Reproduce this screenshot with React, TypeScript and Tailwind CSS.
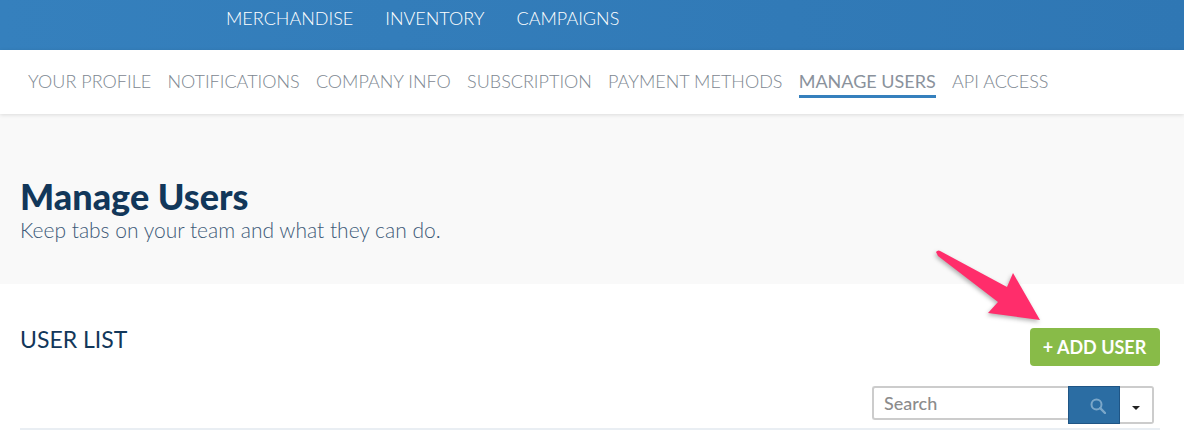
const mainLinks = ["MERCHANDISE", "INVENTORY", "CAMPAIGNS"];

const tabs = [
  "YOUR PROFILE",
  "NOTIFICATIONS",
  "COMPANY INFO",
  "SUBSCRIPTION",
  "PAYMENT METHODS",
  "MANAGE USERS",
  "API ACCESS",
];

export default function App() {
  return (
    <div className="relative h-[434px] w-[1184px] overflow-hidden bg-white font-['Lato',sans-serif]">
      <header className="flex h-[50px] gap-8 bg-gradient-to-r from-[#3580bd] to-[#2f77b4] pl-[226px] pt-[6px]">
        {mainLinks.map((link) => (
          <span key={link} className="h-6 text-[18px] font-light leading-6 text-white">
            {link}
          </span>
        ))}
      </header>

      <nav className="relative flex h-[64px] gap-[16.2px] bg-white pl-7 pt-[20px] shadow-[0_1px_4px_rgba(0,0,0,0.12)]">
        {tabs.map((tab) =>
          tab === "MANAGE USERS" ? (
            <span
              key={tab}
              className="h-[28px] border-b-[3px] border-[#3580bd] text-[18px] leading-[23px] text-[#8a929c]"
            >
              {tab}
            </span>
          ) : (
            <span key={tab} className="h-[28px] text-[18px] font-light leading-[23px] text-[#7d8791]">
              {tab}
            </span>
          ),
        )}
      </nav>

      <section className="h-[170px] bg-[#f9f9f9] pl-5 pt-[61px]">
        <h1 className="text-[36px] font-black leading-[42px] text-[#12375a]">Manage Users</h1>
        <p className="mt-[1px] text-[21px] font-light leading-[24px] text-[#3d5a78]">
          Keep tabs on your team and what they can do.
        </p>
      </section>

      <section className="px-6 pl-5">
        <div className="flex items-start justify-between pt-[44px]">
          <h2 className="text-[23px] leading-[23px] text-[#12375a]">USER LIST</h2>
          <button className="h-[38px] w-[130px] rounded-[4px] bg-[#88bb48] pr-[1px] text-[18px] font-bold text-white">
            + ADD USER
          </button>
        </div>
        <div className="mt-[20px] flex justify-end pr-[6px]">
          <input
            placeholder="Search"
            className="h-[34px] w-[196px] rounded-l-[3px] border-2 border-r-0 border-[#cccccc] bg-white px-[10px] text-[18px] font-medium outline-none placeholder:text-[#8c8c8c]"
          />
          <button className="flex h-[38px] w-[52px] items-center justify-center border border-[#1f5585] bg-[#2b6da3] pl-[7px] pt-[1px]">
            <svg width="16" height="16" viewBox="0 0 16 16" fill="none" stroke="#7ba7c9">
              <circle cx="6.5" cy="6.5" r="5" strokeWidth="2" />
              <path d="M10.2 10.2 L15 15" strokeWidth="2.4" strokeLinecap="round" />
            </svg>
          </button>
          <button className="flex h-[38px] w-[34px] items-center justify-center rounded-r-[3px] border-2 border-l-0 border-[#cccccc] bg-white">
            <span className="mt-[5px] h-0 w-0 border-x-[4px] border-t-[4px] border-x-transparent border-t-[#222222]" />
          </button>
        </div>
        <div className="mt-[4px] h-[2px] w-[1140px] bg-[#e9eef3]" />
      </section>

      {/* annotation arrow drawn over the page */}
      <svg
        className="absolute left-[930px] top-[245px] drop-shadow-[-1px_2px_2px_rgba(0,0,0,0.3)]"
        width="120"
        height="85"
        viewBox="930 245 120 85"
      >
        <path
          d="M936 252 Q938 249 942 252 L1007 287 L1013 273 L1040 320 L988 313 L998 302 L938 256 Z"
          fill="#ff2d6b"
        />
      </svg>
    </div>
  );
}
